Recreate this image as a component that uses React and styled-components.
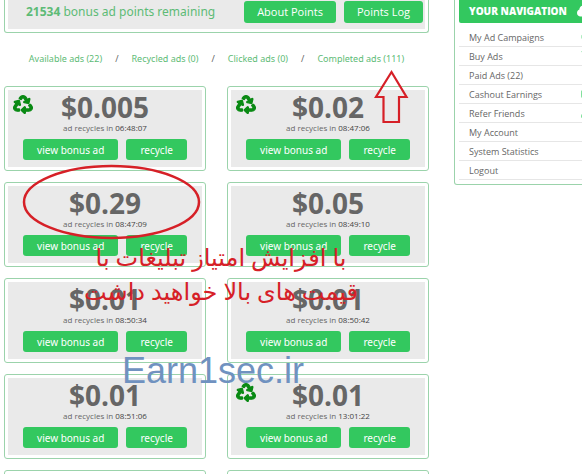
import React from 'react';
import styled, { createGlobalStyle, ThemeProvider } from 'styled-components';
import {
  FaBullhorn,
  FaCloud,
  FaCog,
  FaChartBar,
  FaEnvelope,
  FaMoneyBillAlt,
  FaShoppingCart,
  FaSignOutAlt,
  FaUserPlus,
} from 'react-icons/fa';

const theme = {
  colors: {
    green: '#33c85f',
    paleGreen: '#7fe09b',
    link: '#5dbb76',
    line: '#9bd3ab',
    panel: '#eaeaea',
    text: '#666666',
    divider: '#e6e6e6',
    marker: '#d62027',
    brand: '#7092c0',
  },
  fonts: {
    body: "'Open Sans', 'Liberation Sans', sans-serif",
    wide: "'Noto Sans', 'Open Sans', sans-serif",
    plain: "'Liberation Sans', Arial, sans-serif",
    persian: "'Liberation Serif', 'DejaVu Sans', serif",
  },
};

const GlobalStyle = createGlobalStyle`
  * {
    box-sizing: border-box;
  }

  body {
    margin: 0;
    overflow: hidden;
    background: #fff;
    color: ${theme.colors.text};
    font-family: ${theme.fonts.body};
  }
`;

const Page = styled.div`
  position: relative;
  display: grid;
  grid-template-columns: minmax(0, 1fr) 154px;
  gap: 25px;
  align-items: start;
  height: 100vh;
  margin-right: -26px;
  padding-left: 4px;
  overflow: hidden;
`;

const PointsBar = styled.section`
  padding: 0 3px 3px;
  border: 1px solid ${({ theme }) => theme.colors.line};
  border-top: none;
  border-radius: 0 0 3px 3px;
`;

const PointsContent = styled.div`
  display: flex;
  justify-content: space-between;
  align-items: flex-start;
  height: 29px;
  padding: 1px 2px 0 18px;
  background: ${({ theme }) => theme.colors.panel};
`;

const PointsText = styled.p`
  margin: 0;
  color: ${({ theme }) => theme.colors.link};
  font-family: ${({ theme }) => theme.fonts.wide};
  font-size: 12px;
  line-height: 22px;
  white-space: nowrap;
`;

const ButtonGroup = styled.div`
  display: flex;
  justify-content: center;
  gap: 8px;
`;

const Button = styled.button`
  height: ${({ $large }) => ($large ? '22px' : '21px')};
  padding: 0 ${({ $large }) => ($large ? '13px' : '14px')};
  border: none;
  border-radius: 3px;
  background: ${({ theme }) => theme.colors.green};
  color: #fff;
  font-family: ${({ $large, theme }) => ($large ? theme.fonts.body : theme.fonts.wide)};
  font-size: ${({ $large }) => ($large ? '11px' : '10px')};
  line-height: 20px;
  white-space: nowrap;
  cursor: pointer;
`;

const Tabs = styled.nav`
  display: flex;
  justify-content: center;
  gap: 13px;
  padding: 17px 0 19px;
  font-family: ${({ theme }) => theme.fonts.wide};
  font-size: 9px;
  line-height: 17px;
`;

const TabLink = styled.a`
  color: ${({ theme }) => theme.colors.link};
  text-decoration: none;
`;

const CardGrid = styled.div`
  display: grid;
  grid-template-columns: repeat(2, minmax(0, 1fr));
  gap: 11px 21px;
`;

const Card = styled.article`
  height: 85px;
  padding: 3px;
  border: 1px solid ${({ theme }) => theme.colors.line};
  border-radius: 3px;
`;

const CardContent = styled.div`
  position: relative;
  height: 100%;
  padding-top: 1px;
  background: ${({ theme }) => theme.colors.panel};
  text-align: center;
`;

const Price = styled.h2`
  margin: 0;
  font-size: 28px;
  font-weight: 700;
  line-height: 32px;
`;

const Timer = styled.p`
  margin: 0 0 7px;
  font-size: 8px;
  line-height: 9px;

  span {
    color: #444;
  }
`;

const RecycleBadge = styled.svg`
  position: absolute;
  top: 5px;
  left: 5px;
  width: 20px;
  height: 19px;
  fill: #0a8a14;
  stroke: #0a8a14;
  stroke-width: 36;
`;

const NavPanel = styled.aside`
  padding: 0 4px 4px;
  border: 1px solid ${({ theme }) => theme.colors.line};
  border-top: none;
  border-radius: 0 0 3px 3px;
`;

const NavTitle = styled.h3`
  display: flex;
  justify-content: space-between;
  align-items: center;
  height: 23px;
  margin: 0 0 5px;
  padding: 0 10px 2px;
  border-radius: 0 0 2px 2px;
  background: ${({ theme }) => theme.colors.green};
  color: #fff;
  font-size: 10px;
  font-weight: 800;
  white-space: nowrap;

  svg {
    width: 16px;
    height: 16px;
  }
`;

const NavList = styled.ul`
  margin: 0;
  padding: 0;
  list-style: none;
`;

const NavItem = styled.li`
  height: 19px;
  border-bottom: 1px solid ${({ theme }) => theme.colors.divider};
`;

const NavLink = styled.a`
  display: flex;
  justify-content: space-between;
  align-items: center;
  height: 18px;
  padding: 0 10px;
  color: ${({ theme }) => theme.colors.text};
  font-size: 9px;
  text-decoration: none;

  svg {
    width: 12px;
    height: 10px;
    color: ${({ theme }) => theme.colors.paleGreen};
  }
`;

const Markup = styled.svg`
  position: absolute;
  top: 0;
  left: 0;
  width: 582px;
  height: 474px;
  fill: none;
  stroke: ${({ theme }) => theme.colors.marker};
  pointer-events: none;
`;

const PersianNote = styled.p`
  position: absolute;
  top: 241px;
  left: 84px;
  width: 274px;
  margin: 0;
  color: ${({ theme }) => theme.colors.marker};
  font-family: ${({ theme }) => theme.fonts.persian};
  font-size: 24px;
  line-height: 34px;
  text-align: center;
  white-space: nowrap;
  pointer-events: none;
`;

const Watermark = styled.p`
  position: absolute;
  top: 351px;
  left: 122px;
  margin: 0;
  color: ${({ theme }) => theme.colors.brand};
  font-family: ${({ theme }) => theme.fonts.plain};
  font-size: 36px;
  line-height: 40px;
  pointer-events: none;
`;

const tabs = ['Available ads (22)', 'Recycled ads (0)', 'Clicked ads (0)', 'Completed ads (111)'];

const ads = [
  { price: '$0.005', time: '06:48:07', recycled: true },
  { price: '$0.02', time: '08:47:06', recycled: true },
  { price: '$0.29', time: '08:47:09' },
  { price: '$0.05', time: '08:49:10' },
  { price: '$0.01', time: '08:50:34' },
  { price: '$0.01', time: '08:50:42' },
  { price: '$0.01', time: '08:51:06' },
  { price: '$0.01', time: '13:01:22', recycled: true },
];

const navItems = [
  { name: 'My Ad Campaigns', icon: FaBullhorn },
  { name: 'Buy Ads', icon: FaShoppingCart },
  { name: 'Paid Ads (22)', icon: FaEnvelope },
  { name: 'Cashout Earnings', icon: FaMoneyBillAlt },
  { name: 'Refer Friends', icon: FaUserPlus },
  { name: 'My Account', icon: FaCog },
  { name: 'System Statistics', icon: FaChartBar },
  { name: 'Logout', icon: FaSignOutAlt },
];

const RecycleIcon = () => (
  <RecycleBadge viewBox="-18 -18 548 548" preserveAspectRatio="none" aria-hidden="true">
    <path d="M184.561 261.903c3.232 13.997-12.123 24.635-24.068 17.168l-40.736-25.455-50.867 81.402C55.606 356.273 70.96 384 96.012 384H148c6.627 0 12 5.373 12 12v40c0 6.627-5.373 12-12 12H96.115c-75.334 0-121.302-83.048-81.408-146.88l50.822-81.388-40.725-25.448c-12.081-7.547-8.966-25.961 4.879-29.158l110.237-25.45c8.611-1.988 17.201 3.381 19.189 11.99l25.452 110.237zm98.561-182.915l41.289 66.076-40.74 25.457c-12.051 7.528-9 25.953 4.879 29.158l110.237 25.45c8.672 1.999 17.215-3.438 19.189-11.99l25.45-110.237c3.197-13.844-11.99-24.719-24.068-17.168l-40.687 25.424-41.263-66.082c-37.521-60.033-125.209-60.171-162.816 0l-17.963 28.766c-3.51 5.62-1.8 13.021 3.82 16.533l33.919 21.195c5.62 3.512 13.024 1.803 16.536-3.817l17.961-28.743c12.712-20.341 41.973-19.676 54.257-.022zM497.288 301.12l-27.515-44.065c-3.511-5.623-10.916-7.334-16.538-3.821l-33.861 21.159c-5.62 3.512-7.33 10.915-3.818 16.536l27.564 44.112c13.257 21.211-2.057 48.96-27.136 48.96H320V336.02c0-14.213-17.242-21.383-27.313-11.313l-80 79.981c-6.249 6.248-6.249 16.379 0 22.627l80 79.989C302.689 517.308 320 510.3 320 495.989V448h95.88c75.274 0 121.335-82.997 81.408-146.88z" />
  </RecycleBadge>
);

const AdCard = ({ price, time, recycled }) => (
  <Card>
    <CardContent>
      {recycled && <RecycleIcon />}
      <Price>{price}</Price>
      <Timer>
        ad recycles in <span>{time}</span>
      </Timer>
      <ButtonGroup>
        <Button>view bonus ad</Button>
        <Button>recycle</Button>
      </ButtonGroup>
    </CardContent>
  </Card>
);

const App = () => (
  <ThemeProvider theme={theme}>
    <GlobalStyle />
    <Page>
      <main>
        <PointsBar>
          <PointsContent>
            <PointsText>
              <strong>21534</strong> bonus ad points remaining
            </PointsText>
            <ButtonGroup>
              <Button $large>About Points</Button>
              <Button $large>Points Log</Button>
            </ButtonGroup>
          </PointsContent>
        </PointsBar>

        <Tabs>
          {tabs.map((tab, i) => (
            <React.Fragment key={tab}>
              {i > 0 && <span>/</span>}
              <TabLink href="#ads">{tab}</TabLink>
            </React.Fragment>
          ))}
        </Tabs>

        <CardGrid id="ads">
          {ads.map((ad) => (
            <AdCard key={ad.time} {...ad} />
          ))}
          <Card />
          <Card />
        </CardGrid>
      </main>

      <NavPanel>
        <NavTitle>
          YOUR NAVIGATION
          <FaCloud />
        </NavTitle>
        <NavList>
          {navItems.map(({ name, icon: Icon }) => (
            <NavItem key={name}>
              <NavLink href="#nav">
                {name}
                <Icon />
              </NavLink>
            </NavItem>
          ))}
        </NavList>
      </NavPanel>

      <Markup viewBox="0 0 582 474" aria-hidden="true">
        <ellipse cx="111.500" cy="202" rx="87.500" ry="36" strokeWidth="2.500" />
        <path d="M391.500 72 L406.500 97 H399 V122 H383.500 V97 H376 Z" strokeWidth="2.200" />
      </Markup>
      <PersianNote lang="fa" dir="rtl">
        با افزایش امتیاز تبلیغات با
        <br />
        قیمت های بالا خواهید داشت
      </PersianNote>
      <Watermark>Earn1sec.ir</Watermark>
    </Page>
  </ThemeProvider>
);

export default App;
